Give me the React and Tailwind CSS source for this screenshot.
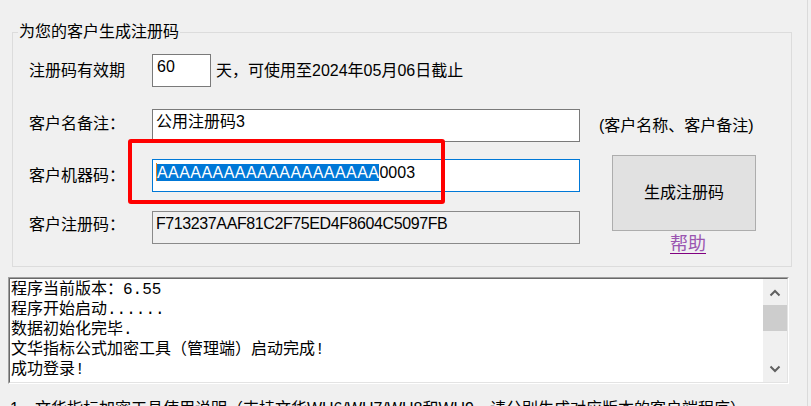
import React from 'react';

const Chevron = ({ up }) => (
    <svg width="12" height="8" viewBox="0 0 12 8" className="block">
        <path
            d={up ? 'M1.5 6.5 L6 2 L10.5 6.5' : 'M1.5 1.5 L6 6 L10.5 1.5'}
            fill="none"
            stroke="#606060"
            strokeWidth="2"
        />
    </svg>
);

const logLines = [
    '程序当前版本：6.55',
    '程序开始启动......',
    '数据初始化完毕.',
    '文华指标公式加密工具（管理端）启动完成!',
    '成功登录!',
];

export default function App() {
    return (
        <div className="relative w-[811px] h-[406px] overflow-hidden bg-[#f0f0f0] text-[16px] text-black font-['Liberation_Sans','Noto_Sans_CJK_SC',sans-serif]">
            <div className="w-[808px] h-full border-r border-[#dadada] pt-[23px]">
                {/* Group box */}
                <fieldset className="ml-[12px] w-[780px] h-[244px] border border-[#dcdcdc]">
                    <legend className="ml-[5px] px-[1px] leading-[18px]">为您的客户生成注册码</legend>
                    <div className="flex">
                        <div className="flex flex-col pl-[16px]">
                            <div className="mt-[13px] flex items-center h-[33px]">
                                <span className="w-[123px] leading-[20px]">注册码有效期</span>
                                <div className="w-[59px] h-[33px] border border-[#7a7a7a] bg-white pl-[4px] pt-[2px] leading-[20px]">60</div>
                                <span className="ml-[5px] leading-[20px]">天，可使用至2024年05月06日截止</span>
                            </div>
                            <div className="mt-[22px] flex items-center h-[33px]">
                                <span className="w-[123px] leading-[20px] -mt-[4px]">客户名备注：</span>
                                <div className="w-[428px] h-[33px] border border-[#7a7a7a] bg-white pl-[3px] pt-[2px] leading-[20px]">公用注册码3</div>
                            </div>
                            <div className="mt-[17px] flex items-center h-[33px]">
                                <span className="w-[123px] leading-[20px]">客户机器码：</span>
                                <div className="w-[428px] h-[33px] border border-[#0078d7] bg-white pl-[3px] pt-[3px] leading-[19px] whitespace-nowrap">
                                    <span className="inline-block w-[1px] h-[18px] bg-[#e8821e] align-top"></span>
                                    <span className="bg-[#0078d7] text-white tracking-[0.45px]">AAAAAAAAAAAAAAAAAAAA</span>
                                    <span>0003</span>
                                </div>
                            </div>
                            <div className="mt-[19px] flex items-center h-[33px]">
                                <span className="w-[123px] leading-[20px] -mt-[6px]">客户注册码：</span>
                                <div className="w-[428px] h-[33px] border border-[#8a8a8a] bg-[#f0f0f0] pl-[3px] pt-[2px] leading-[20px] tracking-[-0.4px]">F713237AAF81C2F75ED4F8604C5097FB</div>
                            </div>
                        </div>
                        <div className="flex flex-col">
                            <span className="ml-[19px] mt-[75px] leading-[20px] whitespace-nowrap">(客户名称、客户备注)</span>
                            <button className="ml-[32px] mt-[19px] w-[144px] h-[76px] bg-[#e1e1e1] border border-[#adadad] leading-[20px]">生成注册码</button>
                            <span className="ml-[90px] mt-[3px] w-fit text-[18px] leading-[20px] text-[#9a55b0] underline underline-offset-[3px] decoration-[#800080]">帮助</span>
                        </div>
                    </div>
                </fieldset>

                {/* Log box */}
                <div className="ml-[8px] mt-[10px] w-[781px] h-[107px] border-t border-l border-t-[#a0a0a0] border-l-[#a0a0a0] border-b border-r border-b-white border-r-white">
                    <div className="h-full flex border-t border-l border-t-[#696969] border-l-[#696969] border-b border-r border-b-[#e3e3e3] border-r-[#e3e3e3]">
                        <div className="flex-1 bg-white pl-[1px] pt-[1px] font-['Liberation_Mono','Noto_Sans_CJK_SC',monospace] leading-[20px]">
                            {logLines.map((l, i) => (
                                <div key={i} className="whitespace-nowrap">{l}</div>
                            ))}
                        </div>
                        <div className="w-[24px] bg-[#f0f0f0] flex flex-col">
                            <div className="h-[25px] flex items-center justify-center pt-[3px]"><Chevron up /></div>
                            <div className="mt-[1px] h-[26px] bg-[#cdcdcd]"></div>
                            <div className="flex-1"></div>
                            <div className="h-[25px] flex items-center justify-center pb-[1px]"><Chevron /></div>
                        </div>
                    </div>
                </div>

                <div className="ml-[10px] mt-[15px] leading-[20px] whitespace-nowrap">1、文华指标加密工具使用说明（支持文华WH6/WH7/WH8和WH9，请分别生成对应版本的客户端程序）</div>
            </div>

            {/* red annotation frame */}
            <div className="absolute left-[128px] top-[139px] w-[317px] h-[65px] border-4 border-[#ff0000] rounded-[3px]"></div>
        </div>
    );
}
